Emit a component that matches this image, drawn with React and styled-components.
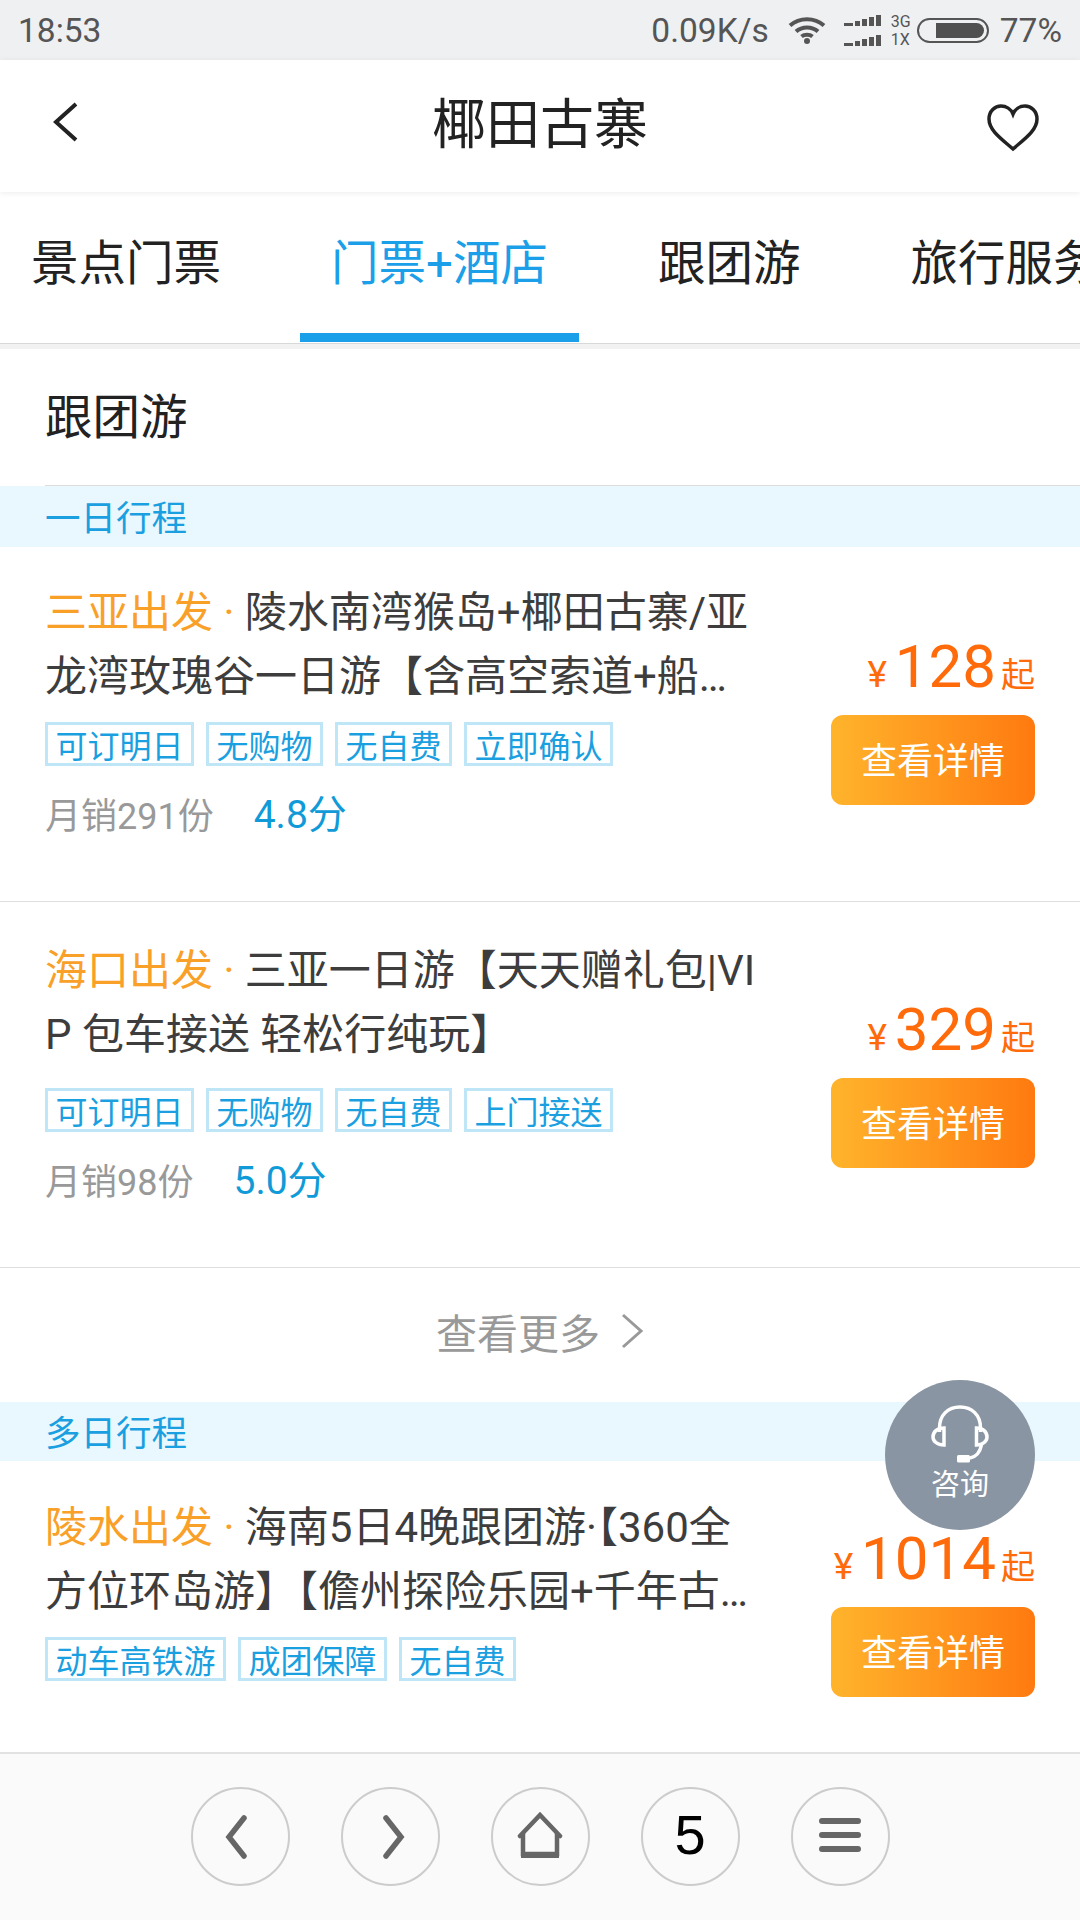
import React from "react";
import styled, { createGlobalStyle } from "styled-components";

const GlobalStyle = createGlobalStyle`
  html, body {
    margin: 0;
    padding: 0;
    background: #fff;
    font-family: "Roboto", "Noto Sans CJK SC", sans-serif;
  }
  * { box-sizing: border-box; }
`;

const Page = styled.div`
  position: relative;
  width: 1080px;
  height: 1920px;
  overflow: hidden;
  display: flex;
  flex-direction: column;
  background: #fff;
`;

const StatusBar = styled.div`
  height: 60px;
  flex: none;
  display: flex;
  align-items: center;
  justify-content: space-between;
  padding: 0 18px;
  background: #eff0f2;
  color: #555;
  font-size: 33.5px;
`;

const StatusRight = styled.div`
  display: flex;
  align-items: center;
`;

const Speed = styled.span`
  margin-right: 19px;
`;

const SignalStack = styled.div`
  display: flex;
  flex-direction: column;
  gap: 9px;
  margin-left: 18px;
`;

const NetLabels = styled.div`
  display: flex;
  flex-direction: column;
  gap: 3px;
  width: 20px;
  margin: 0 6px 0 10px;
  font-size: 16px;
  line-height: 15px;
  white-space: nowrap;
`;

const Battery = styled.div`
  width: 72px;
  height: 25px;
  margin-right: 11px;
  padding: 3px 3px 3px 17px;
  border: 2px solid #555;
  border-radius: 13px;

  &::before {
    content: "";
    display: block;
    height: 100%;
    background: #505050;
    border-radius: 0 9px 9px 0;
  }
`;

const Nav = styled.div`
  height: 132px;
  flex: none;
  display: grid;
  grid-template-columns: 1fr auto 1fr;
  align-items: center;
  padding: 0 40px 12px;
  background: #fff;
  box-shadow: 0 1px 6px rgba(0, 0, 0, 0.08);
  position: relative;
`;

const BackIcon = styled.svg`
  margin: 4px 0 0 12px;
`;

const HeartIcon = styled.svg`
  justify-self: end;
  margin-top: 16px;
`;

const NavTitle = styled.h1`
  margin: 0;
  font-size: 54px;
  font-weight: 400;
  color: #222;
`;

const Tabs = styled.div`
  height: 152px;
  flex: none;
  display: flex;
  align-items: flex-start;
  gap: 48px;
  overflow: hidden;
  border-bottom: 1px solid #d8d8d8;
`;

const Tab = styled.div`
  flex: none;
  height: 150px;
  padding: 0 31px 6px;
  display: flex;
  align-items: center;
  font-size: 47.5px;
  white-space: nowrap;
  color: ${(p) => (p.$active ? "#1a9fe8" : "#222")};
  border-bottom: 9px solid ${(p) => (p.$active ? "#1a9fe8" : "transparent")};
`;

const Strip = styled.div`
  height: 5px;
  flex: none;
  background: #f2f2f2;
`;

const Heading = styled.h2`
  height: 137px;
  flex: none;
  margin: 0 0 0 45px;
  padding-bottom: 7px;
  display: flex;
  align-items: center;
  font-size: 47.5px;
  font-weight: 400;
  color: #222;
  border-bottom: 1px solid #dcdcdc;
`;

const Band = styled.div`
  height: ${(p) => p.$height}px;
  flex: none;
  display: flex;
  align-items: center;
  padding: 0 0 3px 45px;
  background: #e9f8fe;
  color: #1a9fe0;
  font-size: 35.5px;
`;

const Card = styled.div`
  height: ${(p) => p.$height}px;
  flex: none;
  display: flex;
  justify-content: space-between;
  padding: 0 45px;
  border-bottom: 1px solid #dedede;
`;

const Info = styled.div`
  width: 714px;
  padding-top: ${(p) => p.$top}px;
`;

const Title = styled.div`
  font-size: 42px;
  line-height: 64px;
  color: #3d3d3d;
  word-break: break-all;
  display: -webkit-box;
  -webkit-box-orient: vertical;
  -webkit-line-clamp: 2;
  overflow: hidden;
`;

const Origin = styled.span`
  color: #f9a029;
`;

const Tags = styled.div`
  display: flex;
  gap: 12px;
  margin-top: ${(p) => p.$gap}px;
`;

const Tag = styled.span`
  height: 44px;
  padding: 0 7.5px;
  display: flex;
  align-items: center;
  border: 3px solid #bfe6f7;
  color: #1a9fe0;
  font-size: 32px;
  white-space: nowrap;
`;

const Meta = styled.div`
  display: flex;
  align-items: center;
  margin-top: 23px;
  height: 48px;
  color: #999;
  font-size: 36px;
`;

const Score = styled.span`
  margin-left: ${(p) => p.$gap}px;
  margin-top: -5px;
  color: #109bd8;
  font-size: 39px;
`;

const Side = styled.div`
  display: flex;
  flex-direction: column;
  align-items: flex-end;
  padding-top: ${(p) => p.$top}px;
`;

const Price = styled.div`
  height: 64px;
  display: flex;
  align-items: baseline;
  color: #ff6a0a;
  line-height: 64px;
`;

const Yen = styled.span`
  font-size: 37px;
  margin-right: 8px;
`;

const Amount = styled.span`
  font-size: 60px;
`;

const Since = styled.span`
  font-size: 34px;
  margin-left: 5px;
`;

const DetailButton = styled.button`
  width: 204px;
  height: 90px;
  margin-top: 16px;
  padding-bottom: 5px;
  border: none;
  border-radius: 12px;
  background: linear-gradient(90deg, #ffb42c, #ff7a10);
  color: #fff;
  font-family: inherit;
  font-size: 36px;
`;

const More = styled.div`
  height: 134px;
  flex: none;
  display: flex;
  align-items: center;
  justify-content: center;
  gap: 20px;
  padding-bottom: 8px;
  color: #999;
  font-size: 41px;
`;

const Fab = styled.div`
  position: absolute;
  right: 45px;
  top: 1380px;
  width: 150px;
  height: 150px;
  padding-top: 22px;
  border-radius: 50%;
  display: flex;
  flex-direction: column;
  align-items: center;
  background: #8a95a3;
  color: #fff;
  font-size: 29px;
  line-height: 42px;
`;

const BottomBar = styled.div`
  position: absolute;
  left: 0;
  right: 0;
  bottom: 0;
  height: 168px;
  display: flex;
  align-items: center;
  justify-content: center;
  gap: 51px;
  padding-bottom: 1px;
  background: #fafafa;
  border-top: 2px solid #e2e2e2;
`;

const RoundButton = styled.div`
  width: 99px;
  height: 99px;
  padding-bottom: 5px;
  border-radius: 50%;
  border: 2px solid #ccc;
  display: flex;
  align-items: center;
  justify-content: center;
  font-family: "Liberation Sans", sans-serif;
  font-size: 56px;
  color: #000;
`;

const PagerIcon = styled.svg`
  margin: 5px ${(p) => (p.$next ? 0 : 8)}px 0 ${(p) => (p.$next ? 8 : 0)}px;
`;

const HomeIcon = styled.svg`
  margin-top: 2px;
`;

const MenuIcon = styled.svg`
  margin-top: 2px;
`;

const trips = [
  {
    height: 355, top: 34, gap: 13, side: 88, origin: "三亚出发",
    text: "陵水南湾猴岛+椰田古寨/亚龙湾玫瑰谷一日游【含高空索道+船票往返接送",
    tags: ["可订明日", "无购物", "无自费", "立即确认"],
    sales: "月销291份", score: "4.8分", scoreGap: 40, price: "128",
  },
  {
    height: 366, top: 37, gap: 21, side: 96, origin: "海口出发",
    text: "三亚一日游【天天赠礼包|VIP 包车接送 轻松行纯玩】",
    tags: ["可订明日", "无购物", "无自费", "上门接送"],
    sales: "月销98份", score: "5.0分", scoreGap: 40, price: "329",
  },
];

const lastTrip = {
  height: 320, top: 35, gap: 13, side: 66, origin: "陵水出发",
  text: "海南5日4晚跟团游·【360全方位环岛游】【儋州探险乐园+千年古城深度体验",
  tags: ["动车高铁游", "成团保障", "无自费"],
  price: "1014",
};

function TripCard({ trip }) {
  return (
    <Card $height={trip.height}>
      <Info $top={trip.top}>
        <Title>
          <Origin>{trip.origin} · </Origin>
          {trip.text}
        </Title>
        <Tags $gap={trip.gap}>
          {trip.tags.map((t) => (
            <Tag key={t}>{t}</Tag>
          ))}
        </Tags>
        {trip.sales && (
          <Meta>
            {trip.sales}
            <Score $gap={trip.scoreGap}>{trip.score}</Score>
          </Meta>
        )}
      </Info>
      <Side $top={trip.side}>
        <Price>
          <Yen>¥</Yen>
          <Amount>{trip.price}</Amount>
          <Since>起</Since>
        </Price>
        <DetailButton>查看详情</DetailButton>
      </Side>
    </Card>
  );
}

function Wifi() {
  return (
    <svg width="38" height="28" viewBox="0 0 38 28" fill="none" stroke="#555" strokeWidth="4">
      <path d="M2 9.500C11.500 1 26.500 1 36 9.500" />
      <path d="M8 15.500C14 10 24 10 30 15.500" />
      <path d="M13.500 20.500C16.500 18 21.500 18 24.500 20.500" />
      <circle cx="19" cy="25" r="3" fill="#555" stroke="none" />
    </svg>
  );
}

function Signal() {
  return (
    <svg width="37" height="11" viewBox="0 0 37 11" fill="#555">
      <path d="M0 8h9v3H0zM11 6h5v5h-5zM18 4h5v7h-5zM25 2h5v9h-5zM32 0h5v11h-5z" />
    </svg>
  );
}

function App() {
  return (
    <Page>
      <GlobalStyle />
      <StatusBar>
        <span>18:53</span>
        <StatusRight>
          <Speed>0.09K/s</Speed>
          <Wifi />
          <SignalStack>
            <Signal />
            <Signal />
          </SignalStack>
          <NetLabels>
            <span>3G</span>
            <span>1X</span>
          </NetLabels>
          <Battery />
          <span>77%</span>
        </StatusRight>
      </StatusBar>

      <Nav>
        <BackIcon width="26" height="40" viewBox="0 0 26 40" fill="none" stroke="#222" strokeWidth="4">
          <path d="M24 2L4 20L24 38" />
        </BackIcon>
        <NavTitle>椰田古寨</NavTitle>
        <HeartIcon width="54" height="48" viewBox="0 0 54 48" fill="none" stroke="#222" strokeWidth="3.500">
          <path d="M27 45C17 36 3 27 3 15C3 7 9 2 15 2C20 2 25 5 27 10C29 5 34 2 39 2C45 2 51 7 51 15C51 27 37 36 27 45Z" />
        </HeartIcon>
      </Nav>

      <Tabs>
        <Tab>景点门票</Tab>
        <Tab $active>门票+酒店</Tab>
        <Tab>跟团游</Tab>
        <Tab>旅行服务</Tab>
      </Tabs>
      <Strip />

      <Heading>跟团游</Heading>
      <Band $height={61}>一日行程</Band>
      {trips.map((t) => (
        <TripCard key={t.origin} trip={t} />
      ))}
      <More>
        查看更多
        <svg width="24" height="36" viewBox="0 0 24 36" fill="none" stroke="#999" strokeWidth="3">
          <path d="M3 2L21 18L3 34" />
        </svg>
      </More>
      <Band $height={59}>多日行程</Band>
      <TripCard trip={lastTrip} />

      <Fab>
        <svg width="60" height="62" viewBox="0 0 60 62" fill="none" stroke="#fff" strokeWidth="3.500">
          <path d="M9.500 30V26C9.500 13 18 5 30 5C42 5 50.500 13 50.500 26V30" />
          <path d="M14 26C7 26 3 30 3 35C3 39 7 43 14 43Z" />
          <path d="M46.500 26C53 26 57 30 57 35C57 39 53 43 46.500 43Z" />
          <path d="M51.500 43C50 50 46 55 40 56" />
          <rect x="27" y="53" width="13" height="7.500" rx="1.500" fill="#fff" stroke="none" />
        </svg>
        咨询
      </Fab>

      <BottomBar>
        <RoundButton>
          <PagerIcon width="24" height="44" viewBox="0 0 24 44" fill="none" stroke="#666" strokeWidth="5.500" strokeLinecap="round">
            <path d="M20 3L5 22L20 41" />
          </PagerIcon>
        </RoundButton>
        <RoundButton>
          <PagerIcon $next width="24" height="44" viewBox="0 0 24 44" fill="none" stroke="#666" strokeWidth="5.500" strokeLinecap="round">
            <path d="M4 3L19 22L4 41" />
          </PagerIcon>
        </RoundButton>
        <RoundButton>
          <HomeIcon width="48" height="46" viewBox="0 0 48 46" fill="none" stroke="#666" strokeWidth="4.500">
            <path d="M4 24L24 3L44 24" strokeLinecap="round" />
            <path d="M7 21V42H41V21" />
            <path d="M5 43H43" strokeWidth="6" />
          </HomeIcon>
        </RoundButton>
        <RoundButton>5</RoundButton>
        <RoundButton>
          <MenuIcon width="42" height="36" viewBox="0 0 42 36" fill="#666">
            <rect x="0" y="1" width="42" height="6" rx="3" />
            <rect x="0" y="15" width="42" height="6" rx="3" />
            <rect x="0" y="29" width="42" height="6" rx="3" />
          </MenuIcon>
        </RoundButton>
      </BottomBar>
    </Page>
  );
}

export default App;
